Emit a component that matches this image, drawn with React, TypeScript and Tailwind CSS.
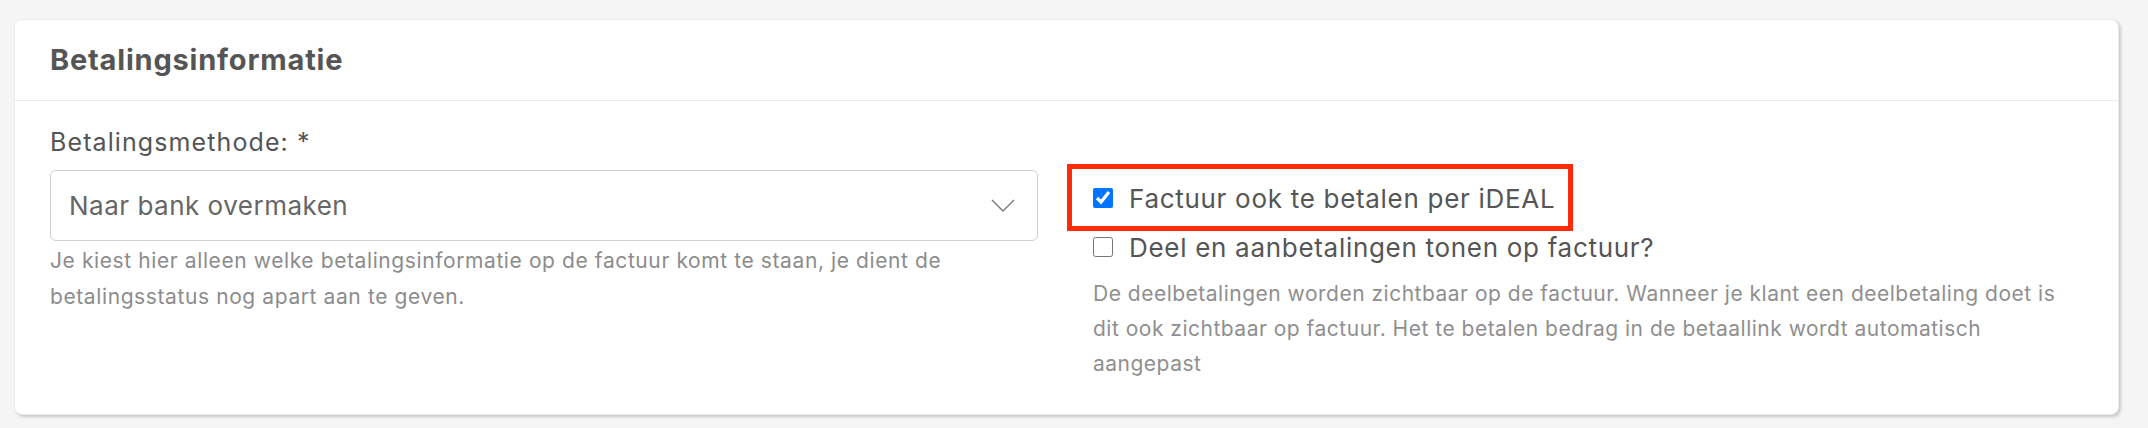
export default function App() {
  return (
    <div className="min-h-screen bg-[#f5f5f5] px-[14px] pt-[19px] pb-[14px] font-['Inter',sans-serif]">
      <div className="w-[2105px] bg-white border border-[#ebebeb] rounded-[8px] shadow-[2px_2px_3px_rgba(0,0,0,0.18)]">
        <div className="h-[81px] px-[35px] flex items-center border-b border-[#ebebeb]">
          <h2 className="text-[29px] font-bold text-[#555] tracking-[0.8px]">Betalingsinformatie</h2>
        </div>

        <div className="px-[35px] pt-[24px] pb-[33px] flex gap-[55px]">
          <div className="w-[988px] shrink-0">
            <label className="block text-[25px] leading-[34px] text-[#555] tracking-[1.1px] mb-[11px]">
              Betalingsmethode: *
            </label>
            <div className="h-[71px] border border-[#cfcfcf] rounded-[6px] flex items-center justify-between pl-[18px] pr-[22px]">
              <span className="text-[26px] text-[#666] tracking-[0.5px]">Naar bank overmaken</span>
              <svg width="24" height="13" viewBox="0 0 24 13" fill="none">
                <polyline points="1,1 12,12 23,1" stroke="#777" strokeWidth="1.4" />
              </svg>
            </div>
            <p className="mt-[2px] text-[21px] leading-[36px] text-[#8c8c8c] tracking-[0.6px]">
              Je kiest hier alleen welke betalingsinformatie op de factuur komt te staan, je dient de
              <br />
              betalingsstatus nog apart aan te geven.
            </p>
          </div>

          <div className="flex-1 pt-[53px]">
            <div className="relative flex items-center gap-[16px] h-[40px]">
              <span className="absolute -left-[26px] -top-[14px] w-[506px] h-[67px] border-[5px] border-[#ff2a0a]" />
              <input type="checkbox" defaultChecked className="w-[20px] h-[20px] accent-[#0075ff] m-0" />
              <span className="text-[26px] text-[#555] tracking-[0.7px]">Factuur ook te betalen per iDEAL</span>
            </div>
            <div className="flex items-center gap-[16px] h-[40px] mt-[9px]">
              <input type="checkbox" className="w-[20px] h-[20px] m-0" />
              <span className="text-[26px] text-[#555] tracking-[0.7px]">Deel en aanbetalingen tonen op factuur?</span>
            </div>
            <p className="mt-[9px] text-[21px] leading-[35px] text-[#8f8f8f] tracking-[0.5px]">
              De deelbetalingen worden zichtbaar op de factuur. Wanneer je klant een deelbetaling doet is
              <br />
              dit ook zichtbaar op factuur. Het te betalen bedrag in de betaallink wordt automatisch
              <br />
              aangepast
            </p>
          </div>
        </div>
      </div>
    </div>
  );
}
